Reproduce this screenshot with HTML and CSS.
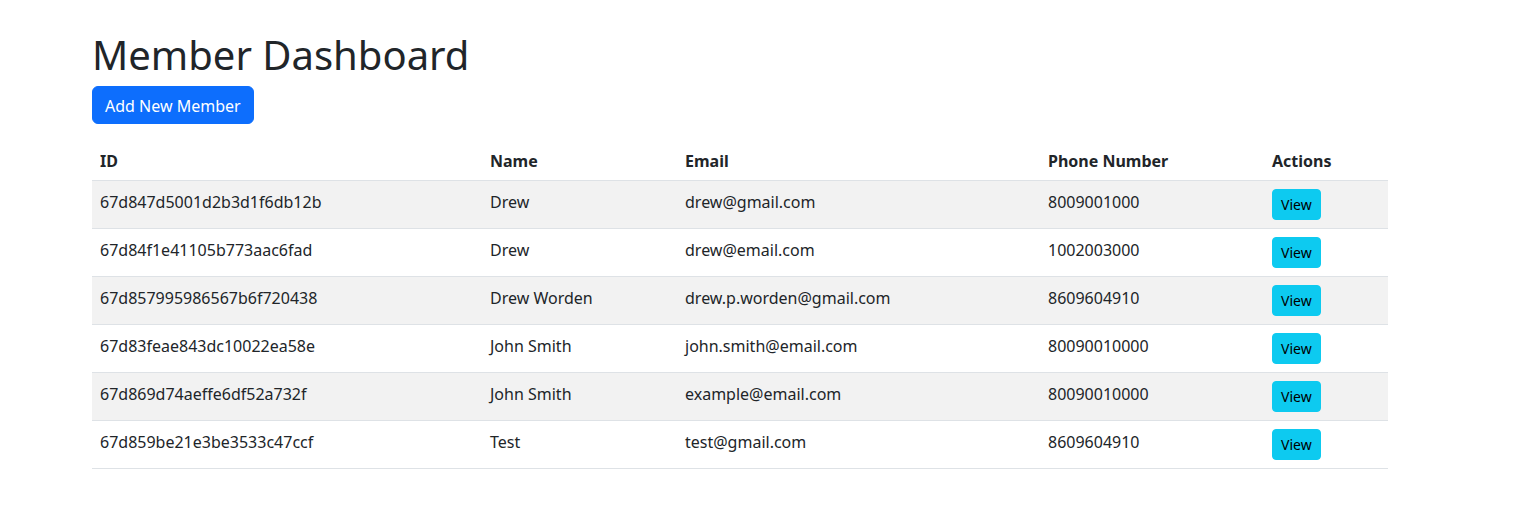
FILE: index.html
```html
<!DOCTYPE html>
<html lang="en">
<head>
<meta charset="utf-8">
<title>Member Dashboard</title>
<link rel="stylesheet" href="styles.css">
</head>
<body>
<div class="container">
  <h1 class="title">Member Dashboard</h1>
  <button class="btn btn-primary">Add New Member</button>
  <table class="table">
    <colgroup>
      <col class="c-id"><col class="c-name"><col class="c-email"><col class="c-phone"><col class="c-actions">
    </colgroup>
    <thead>
      <tr><th>ID</th><th>Name</th><th>Email</th><th>Phone Number</th><th>Actions</th></tr>
    </thead>
    <tbody>
      <tr><td>67d847d5001d2b3d1f6db12b</td><td>Drew</td><td>drew@gmail.com</td><td>8009001000</td><td><button class="btn btn-info">View</button></td></tr>
      <tr><td>67d84f1e41105b773aac6fad</td><td>Drew</td><td>drew@email.com</td><td>1002003000</td><td><button class="btn btn-info">View</button></td></tr>
      <tr><td>67d857995986567b6f720438</td><td>Drew Worden</td><td>drew.p.worden@gmail.com</td><td>8609604910</td><td><button class="btn btn-info">View</button></td></tr>
      <tr><td>67d83feae843dc10022ea58e</td><td>John Smith</td><td>john.smith@email.com</td><td>80090010000</td><td><button class="btn btn-info">View</button></td></tr>
      <tr><td>67d869d74aeffe6df52a732f</td><td>John Smith</td><td>example@email.com</td><td>80090010000</td><td><button class="btn btn-info">View</button></td></tr>
      <tr><td>67d859be21e3be3533c47ccf</td><td>Test</td><td>test@gmail.com</td><td>8609604910</td><td><button class="btn btn-info">View</button></td></tr>
    </tbody>
  </table>
</div>
</body>
</html>
```
FILE: styles.css
```css
* { box-sizing: border-box; }
html, body { margin: 0; padding: 0; background: #fff; }
body {
  font-family: "Noto Sans", "DejaVu Sans", sans-serif;
  font-size: 16px;
  line-height: 1.5;
  color: #212529;
}
.container {
  width: 1296px;
  margin-left: 92px;
  padding-top: 31px;
}
.title {
  margin: 0 0 7px 0;
  font-size: 40px;
  font-weight: 400;
  line-height: 1.2;
}
.btn {
  display: inline-block;
  font-family: inherit;
  border: 1px solid transparent;
  cursor: pointer;
}
.btn-primary {
  background: #0d6efd;
  border-color: #0d6efd;
  color: #fff;
  font-size: 16px;
  line-height: 24px;
  padding: 7px 12px 5px;
  border-radius: 6px;
}
.btn-info {
  background: #0dcaf0;
  border-color: #0dcaf0;
  color: #000;
  font-size: 14px;
  line-height: 21px;
  padding: 4px 8px;
  border-radius: 4px;
}
.table {
  width: 100%;
  margin-top: 16px;
  border-collapse: collapse;
  table-layout: fixed;
}
.c-id { width: 390px; }
.c-name { width: 195px; }
.c-email { width: 363px; }
.c-phone { width: 224px; }
.c-actions { width: 124px; }
.table th, .table td {
  padding: 9px 8px 7px;
  text-align: left;
  vertical-align: top;
  border-bottom: 1px solid #dee2e6;
}
.table td:last-child { padding-top: 8px; padding-bottom: 8px; }
.table th { font-weight: 700; }
.table tbody tr:nth-child(odd) td { background: #f2f2f2; }
```
